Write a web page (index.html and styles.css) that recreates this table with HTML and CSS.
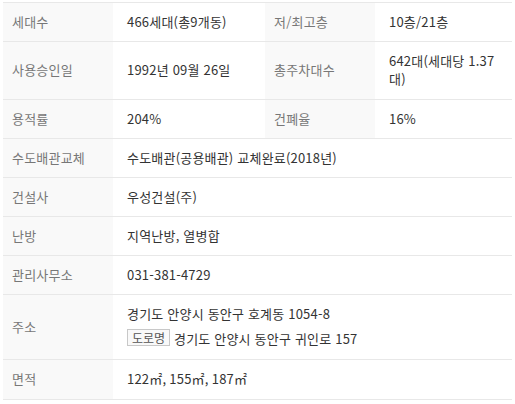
FILE: index.html
```html
<!DOCTYPE html>
<html lang="ko">
<head>
<meta charset="utf-8">
<link rel="stylesheet" href="styles.css">
</head>
<body>
<div class="wrap">
<table class="info">
  <colgroup>
    <col class="c-lab"><col class="c-val1"><col class="c-lab"><col class="c-val2">
  </colgroup>
  <tr>
    <th>세대수</th><td>466세대(총9개동)</td>
    <th>저/최고층</th><td>10층/21층</td>
  </tr>
  <tr class="tall">
    <th>사용승인일</th><td>1992년 09월 26일</td>
    <th>총주차대수</th><td>642대(세대당 1.37 대)</td>
  </tr>
  <tr>
    <th>용적률</th><td>204%</td>
    <th>건폐율</th><td>16%</td>
  </tr>
  <tr>
    <th>수도배관교체</th><td colspan="3">수도배관(공용배관) 교체완료(2018년)</td>
  </tr>
  <tr>
    <th>건설사</th><td colspan="3">우성건설(주)</td>
  </tr>
  <tr>
    <th>난방</th><td colspan="3">지역난방, 열병합</td>
  </tr>
  <tr>
    <th>관리사무소</th><td colspan="3">031-381-4729</td>
  </tr>
  <tr class="tall">
    <th>주소</th>
    <td colspan="3">
      <div>경기도 안양시 동안구 호계동 1054-8</div>
      <div class="road"><span class="badge">도로명</span> 경기도 안양시 동안구 귀인로 157</div>
    </td>
  </tr>
  <tr class="tall">
    <th>면적</th><td colspan="3">122㎡, 155㎡, 187㎡</td>
  </tr>
</table>
</div>
</body>
</html>
```

FILE: styles.css
```css
html, body {
  margin: 0;
  padding: 0;
  background: #fff;
}
.wrap {
  padding: 2px 3px 0 3px;
}
.info {
  width: 509px;
  border-collapse: collapse;
  table-layout: fixed;
  font-family: "Noto Sans CJK KR", "Noto Sans", sans-serif;
  font-size: 13px;
  line-height: 18px;
  letter-spacing: 0.2px;
  border-top: 1px solid #e8e8e8;
}
.c-lab { width: 110px; }
.c-val1 { width: 152px; }
.c-val2 { width: 137px; }
.info tr {
  border-bottom: 1px solid #e8e8e8;
}
.info th {
  background: #f9f9f9;
  color: #777;
  font-weight: normal;
  text-align: left;
  padding: 10px 10px 10px 9px;
  vertical-align: middle;
}
.info td {
  color: #333;
  padding: 10px 10px 10px 14px;
  vertical-align: middle;
  word-break: keep-all;
}
.info tr.tall th,
.info tr.tall td {
  padding-bottom: 11px;
}
.road {
  margin-top: 6px;
}
.badge {
  display: inline-block;
  height: 17px;
  line-height: 15px;
  padding: 0 4px;
  box-sizing: border-box;
  border: 1px solid #c8c8c8;
  background: #f9f9f9;
  color: #555;
  font-size: 12px;
  letter-spacing: 0;
  vertical-align: 1px;
}
```
